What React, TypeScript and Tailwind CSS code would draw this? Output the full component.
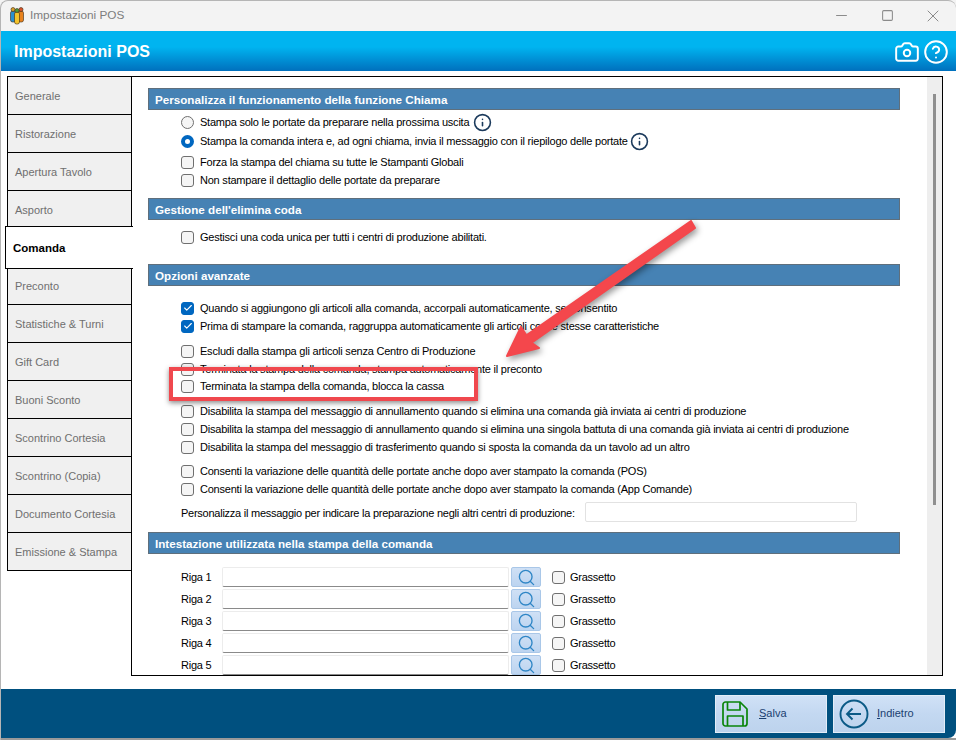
import { Camera, CircleHelp, Info, Minus, Square, X, Search, Check } from "lucide-react";

const tabs = [
  "Generale",
  "Ristorazione",
  "Apertura Tavolo",
  "Asporto",
  "Comanda",
  "Preconto",
  "Statistiche & Turni",
  "Gift Card",
  "Buoni Sconto",
  "Scontrino Cortesia",
  "Scontrino (Copia)",
  "Documento Cortesia",
  "Emissione & Stampa",
];

function Heading({ label, className }: { label: string; className: string }) {
  return (
    <div className={`flex h-[22px] w-[752px] items-center border border-[#5f6f7c] bg-[#4682b4] pl-[6px] pt-px text-[11.65px] font-bold whitespace-nowrap text-white ${className}`}>
      {label}
    </div>
  );
}

function Box({ on }: { on?: boolean }) {
  return (
    <span
      className={`flex h-[13px] w-[13px] shrink-0 items-center justify-center rounded-[3px] border ${
        on ? "border-[#0067c0] bg-[#0067c0]" : "border-[#6f6f6f] bg-[#f5f5f5]"
      }`}
    >
      {on && <Check className="h-[10px] w-[10px] text-white" strokeWidth={2.6} />}
    </span>
  );
}

function CheckRow({ label, on, className = "" }: { label: string; on?: boolean; className?: string }) {
  return (
    <div className={`ml-[33px] flex h-[18px] items-center gap-[6px] text-[11px] tracking-[-0.22px] whitespace-nowrap text-black ${className}`}>
      <Box on={on} />
      {label}
    </div>
  );
}

function RadioRow({ label, on, className = "", children }: { label: string; on?: boolean; className?: string; children?: React.ReactNode }) {
  return (
    <div className={`ml-[33px] flex h-[18px] items-center gap-[6px] text-[11px] tracking-[-0.22px] whitespace-nowrap text-black ${className}`}>
      {on ? (
        <span className="h-[13px] w-[13px] shrink-0 rounded-full border-[4px] border-[#0067c0] bg-white" />
      ) : (
        <span className="h-[13px] w-[13px] shrink-0 rounded-full border border-[#6f6f6f] bg-[#f5f5f5]" />
      )}
      {label}
      {children}
    </div>
  );
}

function RigaRow({ n }: { n: number }) {
  return (
    <div className="mb-[2px] ml-[33px] flex h-[20px] items-center text-[11px] tracking-[-0.25px] whitespace-nowrap text-black">
      <span className="w-[41px]">Riga {n}</span>
      <span className="h-[20px] w-[287px] rounded-[2px] border border-[#ececec] border-b-[#8a8a8a] bg-white" />
      <span className="ml-[2px] flex h-[20px] w-[30px] items-center justify-center rounded-[2px] border border-[#a9c7e8] bg-gradient-to-b from-[#cfe0f5] to-[#bcd4f0]">
        <Search className="h-[19px] w-[19px] text-[#2f86c6]" strokeWidth={1.7} />
      </span>
      <span className="ml-[11px]">
        <Box />
      </span>
      <span className="ml-[5px]">Grassetto</span>
    </div>
  );
}

export default function App() {
  return (
    <div className="relative flex h-[740px] w-[956px] flex-col overflow-hidden bg-white font-['Liberation_Sans',sans-serif]">
      {/* Title bar */}
      <div className="flex h-[31px] shrink-0 items-center bg-[#f3f3f3] pl-[10px]">
        <svg width="14" height="18" viewBox="0 0 14 18" stroke="#3a2a10" strokeWidth="0.6">
          <rect x="0.5" y="4" width="5" height="11" rx="2" fill="#2a8fd0" />
          <rect x="8.5" y="4" width="5" height="11" rx="2" fill="#e8821e" />
          <rect x="4.5" y="5" width="5" height="12" rx="2" fill="#f3c32c" />
          <circle cx="3" cy="2.5" r="2" fill="#d9a02b" />
          <circle cx="11" cy="2.5" r="2" fill="#d9542b" />
          <circle cx="7" cy="3.5" r="2" fill="#4a9a3a" />
        </svg>
        <span className="ml-[6px] pt-px text-[11.8px] text-[#7d7d7d]">Impostazioni POS</span>
        <div className="ml-auto flex items-center">
          <span className="flex w-[46px] justify-center"><Minus className="h-[17px] w-[17px] text-[#8a8a8a]" strokeWidth={1.4} /></span>
          <span className="flex w-[46px] justify-center"><Square className="h-[13px] w-[13px] text-[#8a8a8a]" strokeWidth={1.9} /></span>
          <span className="flex w-[46px] justify-center"><X className="h-[20px] w-[20px] text-[#8a8a8a]" strokeWidth={1.2} /></span>
        </div>
      </div>

      {/* Header band */}
      <div className="flex h-[40px] shrink-0 items-center bg-gradient-to-b from-[#00b4f0] from-40% to-[#0070bd] pl-[14px] pr-[7px] text-white">
        <span className="pt-[2px] text-[16px] font-bold">Impostazioni POS</span>
        <Camera className="ml-auto mt-px h-[26px] w-[26px]" strokeWidth={1.8} />
        <CircleHelp className="ml-[3px] mt-px h-[26px] w-[26px]" strokeWidth={1.8} />
      </div>

      {/* Body */}
      <div className="flex h-[618px] shrink-0 bg-white pl-[7px] pr-[13px] pt-[5px]">
        <div className="relative z-10 flex h-[495px] w-[125px] shrink-0 flex-col">
          {tabs.map((t) =>
            t === "Comanda" ? (
              <div key={t} className="relative z-10 -mb-[3px] -ml-[2px] -mr-[1px] -mt-[2px] flex h-[43px] shrink-0 items-center border border-r-0 border-black bg-white pl-[7px] pt-[2px] text-[11.5px] font-bold text-black">
                {t}
              </div>
            ) : (
              <div key={t} className="-mb-px flex h-[39px] shrink-0 items-center border border-black bg-[#f0f0f0] pl-[7px] pt-[2px] text-[11px] text-[#6f6f6f]">
                {t}
              </div>
            ),
          )}
        </div>
        <div className="relative -ml-[1px] flex h-[600px] flex-1 overflow-hidden border border-black bg-white">
          <div className="w-[794px] shrink-0 pl-[16px] pt-[11px]">
            <Heading label="Personalizza il funzionamento della funzione Chiama" className="" />
            <RadioRow label="Stampa solo le portate da preparare nella prossima uscita" className="mt-[3px]">
              <Info className="-my-px -ml-[2px] h-[19px] w-[19px] text-[#1b3a5c]" strokeWidth={2} />
            </RadioRow>
            <RadioRow on label="Stampa la comanda intera e, ad ogni chiama, invia il messaggio con il riepilogo delle portate" className="mt-[1px]">
              <Info className="-my-px -ml-[4px] h-[19px] w-[19px] text-[#1b3a5c]" strokeWidth={2} />
            </RadioRow>
            <CheckRow label="Forza la stampa del chiama su tutte le Stampanti Globali" className="mt-[3px]" />
            <CheckRow label="Non stampare il dettaglio delle portate da preparare" />

            <Heading label="Gestione dell'elimina coda" className="mt-[9px]" />
            <CheckRow label="Gestisci una coda unica per tutti i centri di produzione abilitati." className="mt-[8px]" />

            <Heading label="Opzioni avanzate" className="mt-[18px]" />
            <CheckRow on label="Quando si aggiungono gli articoli alla comanda, accorpali automaticamente, se consentito" className="mt-[13px]" />
            <CheckRow on label="Prima di stampare la comanda, raggruppa automaticamente gli articoli con le stesse caratteristiche" />
            <CheckRow label="Escludi dalla stampa gli articoli senza Centro di Produzione" className="mt-[7px]" />
            <CheckRow label="Terminata la stampa della comanda, stampa automaticamente il preconto" />
            <CheckRow label="Terminata la stampa della comanda, blocca la cassa" className="-mt-[1px]" />
            <CheckRow label="Disabilita la stampa del messaggio di annullamento quando si elimina una comanda già inviata ai centri di produzione" className="mt-[7px]" />
            <CheckRow label="Disabilita la stampa del messaggio di annullamento quando si elimina una singola battuta di una comanda già inviata ai centri di produzione" />
            <CheckRow label="Disabilita la stampa del messaggio di trasferimento quando si sposta la comanda da un tavolo ad un altro" />
            <CheckRow label="Consenti la variazione delle quantità delle portate anche dopo aver stampato la comanda (POS)" className="mt-[6px]" />
            <CheckRow label="Consenti la variazione delle quantità delle portate anche dopo aver stampato la comanda (App Comande)" />
            <div className="ml-[33px] mt-[4px] flex h-[20px] items-center text-[11px] tracking-[-0.25px] whitespace-nowrap text-black">
              <span className="w-[404px] pt-[2px]">Personalizza il messaggio per indicare la preparazione negli altri centri di produzione:</span>
              <span className="h-[20px] w-[272px] rounded-[2px] border border-[#e2e2e2] bg-white" />
            </div>

            <Heading label="Intestazione utilizzata nella stampa della comanda" className="mt-[10px]" />
            <div className="mt-[13px]">
              {[1, 2, 3, 4, 5].map((n) => (
                <RigaRow key={n} n={n} />
              ))}
            </div>
          </div>
          {/* Scrollbar */}
          <div className="ml-auto flex w-[15px] shrink-0 justify-center bg-[#eeeeee] pt-[17px]">
            <div className="h-[411px] w-[3px] bg-[#8f8f8f]" />
          </div>
        </div>
      </div>

      {/* Footer */}
      <div className="flex h-[49px] shrink-0 items-center justify-end gap-[6px] rounded-br-[8px] bg-[#00507f] pr-[11px]">
        <div className="flex h-[38px] w-[112px] items-center border border-[#e3edf8] bg-gradient-to-b from-[#d0e1f6] via-[#c3d8f1] to-[#bdd3ed] pl-[6px] text-[11px] text-[#1a3f70]">
          <svg width="26" height="26" viewBox="0 0 26 26" fill="none" stroke="#0a850a" strokeWidth="1.7" strokeLinejoin="round">
            <path d="M3.5 1H18L25 8V22.5A2.5 2.5 0 0 1 22.5 25H3.5A2.5 2.5 0 0 1 1 22.5V3.5A2.5 2.5 0 0 1 3.5 1Z" />
            <path d="M5.5 1V9H18V1" />
            <path d="M5.5 25V15H21V25" />
          </svg>
          <span className="ml-[11px]"><u>S</u>alva</span>
        </div>
        <div className="flex h-[38px] w-[112px] items-center border border-[#e3edf8] bg-gradient-to-b from-[#d0e1f6] via-[#c3d8f1] to-[#bdd3ed] pl-[5px] text-[11px] text-[#1a3f70]">
          <svg width="30" height="30" viewBox="0 0 30 30" fill="none" stroke="#0b5a86" strokeWidth="1.9">
            <circle cx="15" cy="15" r="13.5" />
            <path d="M22 15H8M13.5 9.5 8 15l5.5 5.5" />
          </svg>
          <span className="ml-[8px]"><u>I</u>ndietro</span>
        </div>
      </div>
      <div className="h-[2px] shrink-0 bg-[#9a9a9a]" />

      {/* Window edge */}
      <div className="pointer-events-none absolute left-0 top-0 h-[740px] w-[956px] rounded-t-[8px] border-l border-t border-[#b5b5b5]" />

      {/* Annotations on top of the screenshot */}
      <div className="pointer-events-none absolute left-[169px] top-[367px] h-[34px] w-[309px] border-[4px] border-[#f0484e] shadow-[0_2px_5px_rgba(0,0,0,0.45)]" />
      <svg className="pointer-events-none absolute left-0 top-0" width="956" height="740" style={{ filter: "drop-shadow(2px 3px 3px rgba(0,0,0,0.4))" }}>
        <path
          d="M507 356 L521 327 L526.4 335.3 L691 221 L695 228 L531.6 342.7 L539 348 Z"
          fill="#f4474c"
          stroke="#f4474c"
          strokeWidth="2"
          strokeLinejoin="round"
        />
      </svg>
    </div>
  );
}
